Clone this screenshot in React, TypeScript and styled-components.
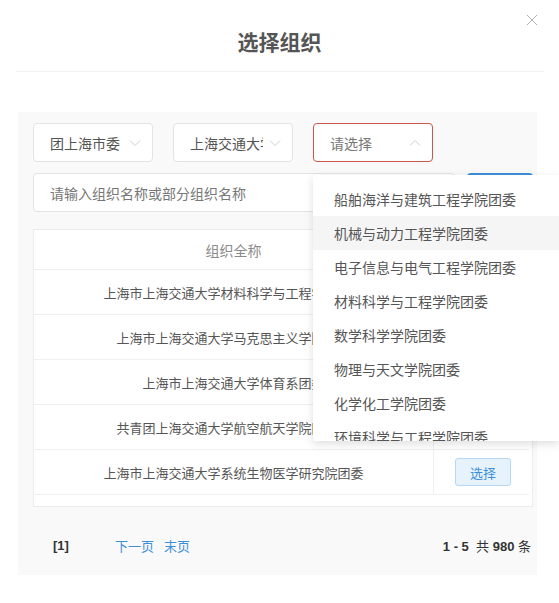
import React from 'react';
import styled, { createGlobalStyle } from 'styled-components';

const GlobalStyle = createGlobalStyle`
  html, body {
    margin: 0;
    padding: 0;
    background: #fff;
    overflow: hidden;
  }
  body {
    font-family: "Liberation Sans", "Noto Sans CJK SC", sans-serif;
    color: #555;
  }
  * {
    box-sizing: border-box;
  }
`;

const departments = [
  '船舶海洋与建筑工程学院团委',
  '机械与动力工程学院团委',
  '电子信息与电气工程学院团委',
  '材料科学与工程学院团委',
  '数学科学学院团委',
  '物理与天文学院团委',
  '化学化工学院团委',
  '环境科学与工程学院团委',
  '生命科学技术学院团委',
];

const rows = [
  '上海市上海交通大学材料科学与工程学院团委',
  '上海市上海交通大学马克思主义学院团委',
  '上海市上海交通大学体育系团委',
  '共青团上海交通大学航空航天学院团委会',
  '上海市上海交通大学系统生物医学研究院团委',
];

function Chevron({ up }: { up?: boolean }) {
  return (
    <svg width="12" height="8" viewBox="0 0 12 8" fill="none">
      <path
        d={up ? 'M1 6.5L6 1.5L11 6.5' : 'M1 1.5L6 6.5L11 1.5'}
        stroke="#cfcfcf"
        strokeWidth="1"
      />
    </svg>
  );
}

function App() {
  return (
    <>
      <GlobalStyle />
      <Modal>
        <Header>
          <Title>选择组织</Title>
          <CloseButton aria-label="close">
            <svg width="12" height="12" viewBox="0 0 12 12">
              <path d="M1 1L11 11M11 1L1 11" stroke="#b0b0b0" strokeWidth="1" />
            </svg>
          </CloseButton>
        </Header>
        <Divider />
        <Body>
          <Panel>
            <FilterRow>
              <Select>
                <SelectText>团上海市委</SelectText>
                <Chevron />
              </Select>
              <Select>
                <SelectText>上海交通大学</SelectText>
                <Chevron />
              </Select>
              <Select $active>
                <SelectText $placeholder>请选择</SelectText>
                <Chevron up />
                <Dropdown>
                  {departments.map((d, i) => (
                    <DropdownItem key={d} $hover={i === 1}>
                      {d}
                    </DropdownItem>
                  ))}
                </Dropdown>
              </Select>
            </FilterRow>
            <SearchRow>
              <SearchInput placeholder="请输入组织名称或部分组织名称" />
              <SearchButton>搜索</SearchButton>
            </SearchRow>
            <TableBox>
              <HeadRow>
                <NameCell $head>组织全称</NameCell>
                <ActionCell $head>操作</ActionCell>
              </HeadRow>
              {rows.map(r => (
                <BodyRow key={r}>
                  <NameCell>{r}</NameCell>
                  <ActionCell>
                    <PickButton>选择</PickButton>
                  </ActionCell>
                </BodyRow>
              ))}
            </TableBox>
            <Footer>
              <PageInfo>
                <CurrentPage>[1]</CurrentPage>
                <PageLink>下一页</PageLink>
                <PageLink>末页</PageLink>
              </PageInfo>
              <Total>
                <b>1 - 5</b>&nbsp;&nbsp;共 <b>980</b> 条
              </Total>
            </Footer>
          </Panel>
        </Body>
      </Modal>
    </>
  );
}

const Modal = styled.div`
  width: 559px;
  height: 603px;
  background: #fff;
`;

const Header = styled.div`
  position: relative;
  height: 71px;
  display: flex;
  align-items: center;
  justify-content: center;
  padding-top: 10px;
`;

const Title = styled.h2`
  margin: 0;
  font-family: "Noto Sans CJK SC", sans-serif;
  font-size: 21px;
  line-height: 28px;
  font-weight: 700;
  color: #555;
`;

const CloseButton = styled.button`
  position: absolute;
  top: 13px;
  right: 20px;
  width: 14px;
  height: 14px;
  padding: 0;
  border: 0;
  background: none;
  display: flex;
  align-items: center;
  justify-content: center;
`;

const Divider = styled.div`
  margin: 0 15px 0 16px;
  border-bottom: 1px solid #f2f2f2;
`;

const Body = styled.div`
  padding: 40px 22px 0 18px;
`;

const Panel = styled.div`
  background: #f9f9fa;
  padding: 11px 4px 0 15px;
  height: 463px;
`;

const FilterRow = styled.div`
  display: flex;
  gap: 20px;
`;

const Select = styled.div<{ $active?: boolean }>`
  position: relative;
  width: 120px;
  height: 39px;
  display: flex;
  align-items: center;
  gap: 6px;
  padding: 0 11px 0 16px;
  background: #fff;
  border: 1px solid ${p => (p.$active ? '#c9574c' : '#e3e3e3')};
  border-radius: 4px;
`;

const SelectText = styled.span<{ $placeholder?: boolean }>`
  flex: 1;
  overflow: hidden;
  white-space: nowrap;
  font-family: "Noto Sans CJK SC", sans-serif;
  font-size: 14px;
  line-height: 20px;
  color: ${p => (p.$placeholder ? '#777' : '#555')};
`;

const Dropdown = styled.ul`
  position: absolute;
  top: 51px;
  left: -1px;
  z-index: 10;
  width: 246px;
  height: 266px;
  margin: 0;
  padding: 7px 0 0;
  list-style: none;
  overflow: hidden;
  background: #fff;
  border-radius: 3px 0 0 3px;
  box-shadow: 0 3px 10px rgba(0, 0, 0, 0.13);
`;

const DropdownItem = styled.li<{ $hover?: boolean }>`
  height: 34px;
  padding-left: 21px;
  display: flex;
  align-items: center;
  white-space: nowrap;
  font-family: "Noto Sans CJK SC", sans-serif;
  font-size: 14px;
  color: #555;
  background: ${p => (p.$hover ? '#f5f5f6' : '#fff')};
`;

const SearchRow = styled.div`
  display: flex;
  gap: 12px;
  margin-top: 11px;
  height: 39px;
`;

const SearchInput = styled.input`
  width: 422px;
  height: 39px;
  padding: 0 16px;
  border: 1px solid #e3e3e3;
  border-radius: 4px;
  background: #fff;
  font-family: "Noto Sans CJK SC", sans-serif;
  font-size: 14px;
  color: #555;
  outline: none;
  &::placeholder {
    color: #777;
  }
`;

const SearchButton = styled.button`
  width: 66px;
  height: 39px;
  border: 0;
  border-radius: 4px;
  background: #3d8fd8;
  color: #fff;
  font-family: "Noto Sans CJK SC", sans-serif;
  font-size: 14px;
`;

const TableBox = styled.div`
  margin-top: 17px;
  width: 500px;
  height: 278px;
  background: #fff;
  border: 1px solid #ececec;
  padding-right: 3px;
`;

const HeadRow = styled.div`
  display: flex;
  height: 40px;
  border-bottom: 1px solid #efefef;
`;

const BodyRow = styled.div`
  display: flex;
  height: 45px;
  border-bottom: 1px solid #efefef;
`;

const NameCell = styled.div<{ $head?: boolean }>`
  width: 399px;
  display: flex;
  align-items: center;
  justify-content: center;
  white-space: nowrap;
  font-family: "Noto Sans CJK SC", sans-serif;
  font-size: ${p => (p.$head ? '14px' : '13px')};
  color: ${p => (p.$head ? '#8a8a8a' : '#555')};
`;

const ActionCell = styled.div<{ $head?: boolean }>`
  flex: 1;
  display: flex;
  align-items: center;
  justify-content: center;
  padding-left: 3px;
  border-left: 1px solid #efefef;
  font-family: "Noto Sans CJK SC", sans-serif;
  font-size: 14px;
  color: #8a8a8a;
`;

const PickButton = styled.button`
  width: 56px;
  height: 28px;
  padding: 0;
  border: 1px solid #b6d9f3;
  border-radius: 3px;
  background: #e7f3fc;
  color: #3d8fd8;
  font-family: "Noto Sans CJK SC", sans-serif;
  font-size: 13px;
`;

const Footer = styled.div`
  display: flex;
  align-items: center;
  justify-content: space-between;
  height: 76px;
  padding: 0 2px 0 20px;
`;

const PageInfo = styled.div`
  display: flex;
  align-items: center;
`;

const CurrentPage = styled.span`
  font-family: "Liberation Sans", sans-serif;
  font-weight: 700;
  font-size: 13px;
  color: #333;
  margin-right: 46px;
`;

const PageLink = styled.a`
  font-family: "Noto Sans CJK SC", sans-serif;
  font-size: 13px;
  color: #3d8fd8;
  margin-right: 10px;
  cursor: pointer;
`;

const Total = styled.div`
  font-family: "Liberation Sans", "Noto Sans CJK SC", sans-serif;
  font-size: 13px;
  color: #333;
  b {
    font-weight: 700;
  }
`;

export default App;
